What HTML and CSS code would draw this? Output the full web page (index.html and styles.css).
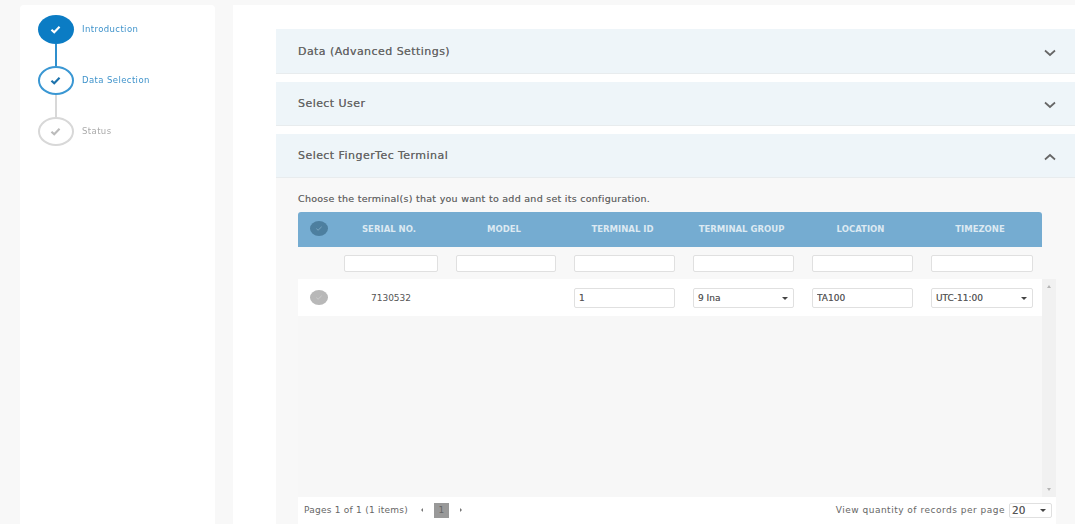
FILE: index.html
```html
<!DOCTYPE html>
<html lang="en">
<head>
<meta charset="utf-8">
<title>Add Terminal</title>
<link rel="stylesheet" href="styles.css">
</head>
<body>
<div class="page">
  <aside class="sidebar">
    <div class="step">
      <span class="dot dot-done"><svg class="tick" viewBox="0 0 12 10"><path d="M1.5 5.2 4.6 8 10.5 2"/></svg></span>
      <span class="step-label">Introduction</span>
    </div>
    <div class="line line-blue"></div>
    <div class="step">
      <span class="dot dot-current"><svg class="tick" viewBox="0 0 12 10"><path d="M1.5 5.2 4.6 8 10.5 2"/></svg></span>
      <span class="step-label">Data Selection</span>
    </div>
    <div class="line"></div>
    <div class="step step-todo">
      <span class="dot dot-todo"><svg class="tick" viewBox="0 0 12 10"><path d="M1.5 5.2 4.6 8 10.5 2"/></svg></span>
      <span class="step-label">Status</span>
    </div>
  </aside>
  <main class="main">
    <div class="acc-head">
      <span>Data (Advanced Settings)</span>
      <svg class="chev" viewBox="0 0 12 8"><path d="M1 1.5 6 6l5-4.5"/></svg>
    </div>
    <div class="acc-head">
      <span>Select User</span>
      <svg class="chev" viewBox="0 0 12 8"><path d="M1 1.5 6 6l5-4.5"/></svg>
    </div>
    <div class="acc-head">
      <span>Select FingerTec Terminal</span>
      <svg class="chev" viewBox="0 0 12 8"><path d="M1 6.5 6 2l5 4.5"/></svg>
    </div>
    <section class="acc-body">
      <p class="intro">Choose the terminal(s) that you want to add and set its configuration.</p>
      <div class="grid grid-head">
        <span class="check check-head"><svg class="tick-small" viewBox="0 0 12 10"><path d="M2 5.2 4.6 7.6 10 2.4"/></svg></span>
        <span class="head-cell">SERIAL NO.</span>
        <span class="head-cell">MODEL</span>
        <span class="head-cell">TERMINAL ID</span>
        <span class="head-cell">TERMINAL GROUP</span>
        <span class="head-cell">LOCATION</span>
        <span class="head-cell">TIMEZONE</span>
      </div>
      <div class="grid grid-filter">
        <span></span>
        <input class="field filter" type="text">
        <input class="field filter" type="text">
        <input class="field filter" type="text">
        <input class="field filter" type="text">
        <input class="field filter" type="text">
        <input class="field filter" type="text">
      </div>
      <div class="scroller">
        <div class="rows">
          <div class="grid grid-row">
            <span class="check check-row"><svg class="tick-small" viewBox="0 0 12 10"><path d="M2 5.2 4.6 7.6 10 2.4"/></svg></span>
            <span class="serial">7130532</span>
            <span></span>
            <input class="field cell" type="text" value="1">
            <div class="field cell dropdown">9 Ina</div>
            <input class="field cell" type="text" value="TA100">
            <div class="field cell dropdown">UTC-11:00</div>
          </div>
        </div>
        <div class="scrollbar">
          <span class="arrow-up"></span>
          <span class="arrow-down"></span>
        </div>
      </div>
      <div class="pager">
        <div class="pager-side">
          <span class="pager-left">Pages 1 of 1 (1 items)</span>
          <span class="page-prev"></span>
          <span class="page-num">1</span>
          <span class="page-next"></span>
        </div>
        <div class="pager-side">
          <span class="pager-right">View quantity of records per page</span>
          <div class="field dropdown per-page">20</div>
        </div>
      </div>
    </section>
  </main>
</div>
</body>
</html>
```

FILE: styles.css
```css
* { box-sizing: border-box; }

html, body {
  margin: 0;
  height: 100%;
  overflow: hidden;
}

body {
  background: #f8f8f8;
  color: #555;
  font-family: "DejaVu Sans", sans-serif;
  font-size: 9px;
}

.page {
  display: flex;
  gap: 18px;
  height: 524px;
  padding: 5px 0 0 20px;
  filter: blur(0.5px);
}

.sidebar {
  width: 195px;
  flex: none;
  background: #fff;
  border-radius: 4px 4px 0 0;
  padding: 10px 0 0 18px;
}

.step {
  display: flex;
  align-items: center;
  gap: 8px;
  height: 29px;
  color: #3f93cb;
  font-size: 8.5px;
  letter-spacing: 0.4px;
}

.step-todo { color: #aaa; }

.step-label { position: relative; top: -1px; }

.dot {
  width: 36px;
  height: 29px;
  flex: none;
  border-radius: 50%;
  display: flex;
  align-items: center;
  justify-content: center;
}

.dot-done { background: #0b7cc4; stroke: #fff; }
.dot-current { background: #fff; border: 2px solid #3a97d3; stroke: #1c72ac; }
.dot-todo { background: #fff; border: 2px solid #d8d8d8; stroke: #bbb; }

.tick {
  width: 11px;
  height: 9px;
  margin-right: 1px;
  fill: none;
  stroke-width: 2.4;
}

.line {
  width: 2px;
  height: 22px;
  margin-left: 17px;
  background: #d8d8d8;
}

.line-blue { background: #2f8fcd; }

.main {
  flex: 1;
  background: #fff;
  padding: 24px 0 0 43px;
  display: flex;
  flex-direction: column;
  min-width: 0;
}

.acc-head {
  display: flex;
  align-items: center;
  justify-content: space-between;
  height: 44px;
  margin-bottom: 8px;
  padding: 0 19px 0 22px;
  background: #eef5f9;
  border-bottom: 1px solid #e8ecee;
  font-size: 11px;
  letter-spacing: 0.45px;
  color: #666;
  text-shadow: 0 0 0.6px #777;
}

.acc-head:first-child { height: 45px; }

.acc-head:nth-child(3) { margin-bottom: 0; }

.chev {
  width: 12px;
  height: 8px;
  margin-top: 3px;
  fill: none;
  stroke: #666;
  stroke-width: 1.7;
}

.acc-body {
  flex: 1;
  background: #f8f8f8;
  padding: 0 19px 0 22px;
  min-height: 0;
  display: flex;
  flex-direction: column;
}

.intro {
  margin: 0;
  height: 34px;
  padding-top: 15px;
  line-height: 12px;
  font-size: 9.5px;
  letter-spacing: 0.27px;
  color: #666;
  text-shadow: 0 0 0.4px #999;
}

.grid {
  display: grid;
  grid-template-columns: 28px 94px 100px 101px 101px 101px 102px;
  column-gap: 18px;
  align-items: center;
  width: 744px;
}

.grid-head {
  height: 35px;
  padding-bottom: 2px;
  background: #75acd1;
  border-radius: 3px 3px 0 0;
  color: #dce9f2;
  font-size: 8.5px;
  font-weight: 700;
  text-align: center;
}

.head-cell { padding-right: 4px; }

.grid-filter {
  height: 32px;
  padding-top: 1px;
}

.grid-row {
  height: 37px;
  background: #fff;
  color: #555;
}

.check {
  width: 18px;
  height: 15px;
  margin-left: 12px;
  border-radius: 50%;
  display: flex;
  align-items: center;
  justify-content: center;
}

.check-head { background: #4d7f9f; stroke: #82aac4; }
.check-row { background: #b8b8b8; stroke: #cfcfcf; }

.tick-small {
  width: 8px;
  height: 7px;
  fill: none;
  stroke-width: 1.3;
}

.serial { text-align: center; }

.field {
  width: 100%;
  margin: 0;
  border: 1px solid #e0e0e0;
  border-radius: 2px;
  background: #fff;
  color: #555;
  font: inherit;
  padding: 0 4px;
  outline: none;
  text-shadow: 0 0 0.4px #999;
}

.filter { height: 17px; }

.cell {
  height: 20px;
  line-height: 18px;
}

.dropdown { position: relative; }

.dropdown::after {
  content: "";
  position: absolute;
  right: 5px;
  top: 50%;
  margin-top: -1px;
  border: 3px solid transparent;
  border-top-color: #444;
  border-bottom-width: 0;
}

.scroller {
  display: flex;
  height: 218px;
}

.rows {
  width: 744px;
  background: #f7f7f7;
}

.scrollbar {
  width: 14px;
  background: #f1f1f1;
  display: flex;
  flex-direction: column;
  justify-content: space-between;
  align-items: center;
  padding: 6px 0;
}

.arrow-up, .arrow-down {
  border: 3px solid transparent;
  border-left-width: 2.5px;
  border-right-width: 2.5px;
}

.arrow-up { border-top-width: 0; border-bottom-color: #b5b5b5; }
.arrow-down { border-bottom-width: 0; border-top-color: #b5b5b5; }

.pager {
  display: flex;
  align-items: center;
  justify-content: space-between;
  width: 758px;
  height: 27px;
  padding: 0 4px 1px 6px;
  background: #fff;
  color: #666;
}

.pager-side {
  display: flex;
  align-items: center;
}

.pager-left { letter-spacing: 0.24px; }

.pager-right { letter-spacing: 0.5px; }

.page-prev, .page-next {
  border: 2.5px solid transparent;
  border-left-width: 2px;
  border-right-width: 2px;
}

.page-prev {
  margin-left: 13px;
  border-left-width: 0;
  border-right-color: #777;
}

.page-next {
  margin-left: 11px;
  border-right-width: 0;
  border-left-color: #777;
}

.page-num {
  width: 15px;
  height: 15px;
  margin-left: 11px;
  background: #999;
  color: #666;
  line-height: 15px;
  text-align: center;
}

.per-page {
  width: 43px;
  height: 15px;
  line-height: 13px;
  margin-left: 4px;
  padding-left: 2px;
  font-size: 10.5px;
  margin-right: 0;
}
```
